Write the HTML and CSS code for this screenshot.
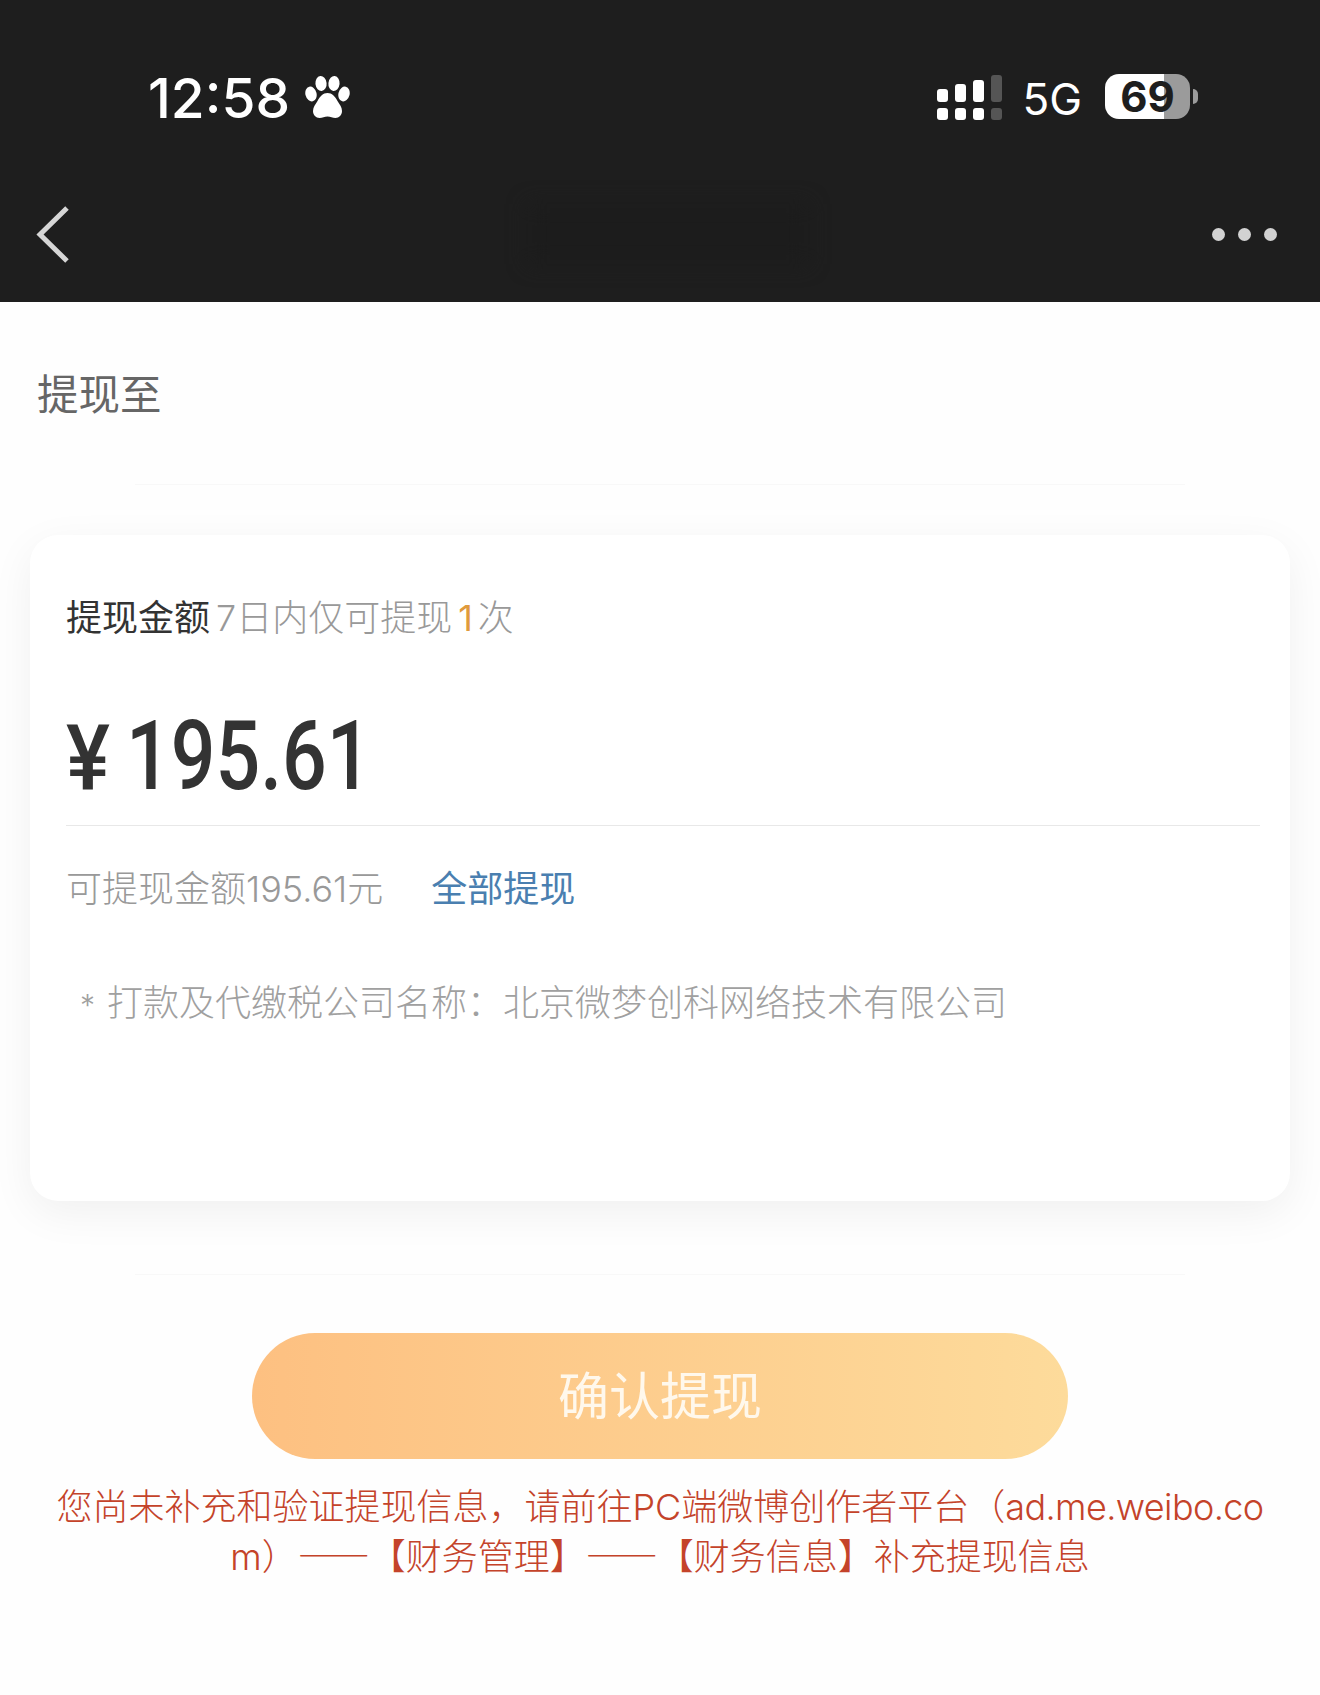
FILE: index.html
```html
<!DOCTYPE html>
<html lang="zh-CN">
<head>
    <meta charset="UTF-8">
    <meta name="viewport" content="width=device-width, initial-scale=1.0">
    <title>提现</title>
    <link rel="stylesheet" href="styles.css">
</head>
<body>
    <header class="top">
        <!-- Phone status bar -->
        <div class="status">
            <div class="status-left">
                <span class="time">12:58</span>
                <svg class="paw" viewBox="0 0 46 46" width="46" height="46" fill="#fff">
                    <ellipse cx="7" cy="20" rx="5.6" ry="7.5" transform="rotate(-14 7 20)"/>
                    <ellipse cx="17" cy="9.5" rx="5.6" ry="7.5" transform="rotate(-6 17 9.5)"/>
                    <ellipse cx="30" cy="9.5" rx="5.6" ry="7.5" transform="rotate(6 30 9.5)"/>
                    <ellipse cx="40" cy="20" rx="5.6" ry="7.5" transform="rotate(14 40 20)"/>
                    <path d="M23.5 19c4.5 0 7.500 3.500 10 8 2 3.500 4.500 6 4.500 10 0 4-3 7-6.500 7-3 0-5-1.500-8-1.500s-5 1.500-8 1.500c-3.500 0-6.500-3-6.500-7 0-4 2.500-6.500 4.500-10 2.500-4.500 5.500-8 10-8z"/>
                </svg>
            </div>
            <div class="status-right">
                <svg class="signal" viewBox="0 0 65 45" width="65" height="45">
                    <rect x="0" y="14" width="11" height="13" rx="3" fill="#fff"/>
                    <rect x="18" y="9" width="11" height="18" rx="3" fill="#fff"/>
                    <rect x="36" y="5" width="11" height="22" rx="3" fill="#fff"/>
                    <rect x="54" y="0" width="11" height="27" rx="3" fill="#555"/>
                    <rect x="0" y="33" width="11" height="12" rx="3" fill="#fff"/>
                    <rect x="18" y="33" width="11" height="12" rx="3" fill="#fff"/>
                    <rect x="36" y="33" width="11" height="12" rx="3" fill="#fff"/>
                    <rect x="54" y="33" width="11" height="12" rx="3" fill="#555"/>
                </svg>
                <span class="net">5G</span>
                <div class="battery">
                    <span class="battery-level">69</span>
                </div>
                <span class="battery-nub"></span>
            </div>
        </div>

        <!-- Title bar, the title itself is blurred out -->
        <nav class="navbar">
            <svg class="back" viewBox="0 0 34 58" width="34" height="58" fill="none" stroke="#d6d6d6" stroke-width="5">
                <path d="M32 3L5 29.500l27 26.500"/>
            </svg>
            <div class="smudge"></div>
            <div class="more"><i></i><i></i><i></i></div>
        </nav>
    </header>

    <main>
        <div class="payee">提现至</div>
        <div class="hairline"></div>

        <section class="card">
            <div class="card-title">
                <b>提现金额</b>
                <span class="limit">7日内仅可提现<em>1</em>次</span>
            </div>
            <div class="amount"><span class="yen">¥</span><span class="digits">195.61</span></div>
            <div class="available">
                <span>可提现金额195.61元</span>
                <a href="#" class="all">全部提现</a>
            </div>
            <div class="note"><span class="star">*</span>打款及代缴税公司名称：北京微梦创科网络技术有限公司</div>
        </section>

        <div class="hairline hairline-low"></div>

        <button class="confirm" type="button">确认提现</button>
        <p class="warning">您尚未补充和验证提现信息，请前往PC端微博创作者平台（<span class="site">ad.me.weibo.co</span><br>m）<span class="dash">——</span>【财务管理】<span class="dash">——</span>【财务信息】补充提现信息</p>
    </main>
</body>
</html>
```

FILE: styles.css
```css
/* General styling */
* {
    box-sizing: border-box;
}

body {
    margin: 0;
    height: 1695px;
    overflow: hidden;
    background-color: #fefefe;
    font-family: Inter, "Noto Sans CJK SC", sans-serif;
}

/* Header styling */
.top {
    height: 302px;
    background-color: #1e1e1e;
    color: white;
}

.status {
    height: 194px;
    display: flex;
    align-items: center;
    justify-content: space-between;
    padding: 0 122px 0 148px;
}

.status-left {
    display: flex;
    align-items: center;
    gap: 14px;
}

.time {
    padding-top: 2px;
    font-size: 55px;
    font-weight: 500;
    line-height: 64px;
}

.paw {
    display: block;
}

.status-right {
    display: flex;
    align-items: center;
}

.signal {
    display: block;
}

.net {
    margin-left: 20px;
    padding-top: 3px;
    font-size: 44px;
    line-height: 50px;
}

.battery {
    width: 85px;
    height: 45px;
    margin: -2px 0 0 23px;
    border-radius: 14px;
    background: linear-gradient(to right, #fff 69.500%, #9b9b9b 69.500%);
    display: flex;
    align-items: center;
    justify-content: center;
}

.battery-level {
    color: #1e1e1e;
    font-size: 42px;
    font-weight: 700;
    line-height: 45px;
}

.battery-nub {
    width: 5px;
    height: 15px;
    margin: -2px 0 0 3px;
    border-radius: 0 5px 5px 0;
    background-color: #9b9b9b;
}

.navbar {
    height: 108px;
    padding: 0 43px 28px 35px;
    display: flex;
    align-items: center;
    justify-content: space-between;
}

.back {
    display: block;
}

.smudge {
    width: 280px;
    height: 60px;
    margin-left: 54px;
    background-color: #1c1c1c;
    filter: blur(10px);
}

.more {
    display: flex;
    gap: 13px;
}

.more i {
    width: 13px;
    height: 13px;
    border-radius: 50%;
    background-color: #d2d2d2;
}

/* Page content */
.payee {
    padding: 65px 37px 0;
    height: 182px;
    color: #666;
    font-size: 41.500px;
    line-height: 56px;
}

.hairline {
    height: 1px;
    margin: 0 135px;
    background-color: #f8f8f8;
}

.hairline-low {
    margin-top: 73px;
}

/* Amount card */
.card {
    height: 666px;
    margin: 50px 30px 0;
    padding: 58px 30px 0 36px;
    background-color: white;
    border-radius: 28px;
    box-shadow: 0 12px 44px rgba(0, 0, 0, 0.06);
}

.card-title {
    display: flex;
    align-items: center;
    gap: 6px;
    font-size: 36px;
    line-height: 50px;
}

.card-title b {
    color: #333;
    font-weight: 400;
}

.limit {
    color: #999;
    font-weight: 300;
}

.limit em {
    padding: 0 5px 0 6px;
    color: #e09a3c;
    font-style: normal;
    font-weight: 400;
}

.amount {
    display: flex;
    align-items: baseline;
    height: 183px;
    padding: 63px 0 19px;
    border-bottom: 1px solid #e8e8e8;
    color: #333;
    font-family: Roboto, sans-serif;
    font-weight: 500;
    line-height: 100px;
}

/* DIN style glyphs, narrowed from Roboto */
.yen {
    width: 60px;
    font-size: 90px;
    transform: scaleX(0.92);
    transform-origin: left center;
}

.digits {
    font-size: 96px;
    transform: scaleX(0.82);
    transform-origin: left center;
}

.available {
    display: flex;
    gap: 48px;
    margin-top: 38px;
    color: #999;
    font-size: 36px;
    font-weight: 300;
    line-height: 50px;
}

.all {
    color: #4a7fb0;
    font-weight: 400;
    text-decoration: none;
}

.note {
    margin-top: 64px;
    color: #a0a0a0;
    font-size: 36px;
    font-weight: 300;
    line-height: 50px;
}

.star {
    display: inline-block;
    width: 41px;
    padding-left: 14px;
    font-size: 30px;
}

/* Confirm button */
.confirm {
    display: block;
    width: 816px;
    height: 126px;
    margin: 58px 0 0 252px;
    padding: 0 0 6px;
    border: none;
    border-radius: 63px;
    background: linear-gradient(to right, #fdc081, #fddb9b);
    color: #fff8ec;
    font-family: inherit;
    font-size: 51px;
    font-weight: 400;
}

.warning {
    width: 1220px;
    margin: 23px auto 0;
    color: #c4432a;
    font-size: 36px;
    font-weight: 300;
    line-height: 50px;
    text-align: center;
}

.site {
    letter-spacing: -0.6px;
}

.dash {
    font-family: "Noto Sans CJK SC", sans-serif;
    line-height: 1;
}
```
